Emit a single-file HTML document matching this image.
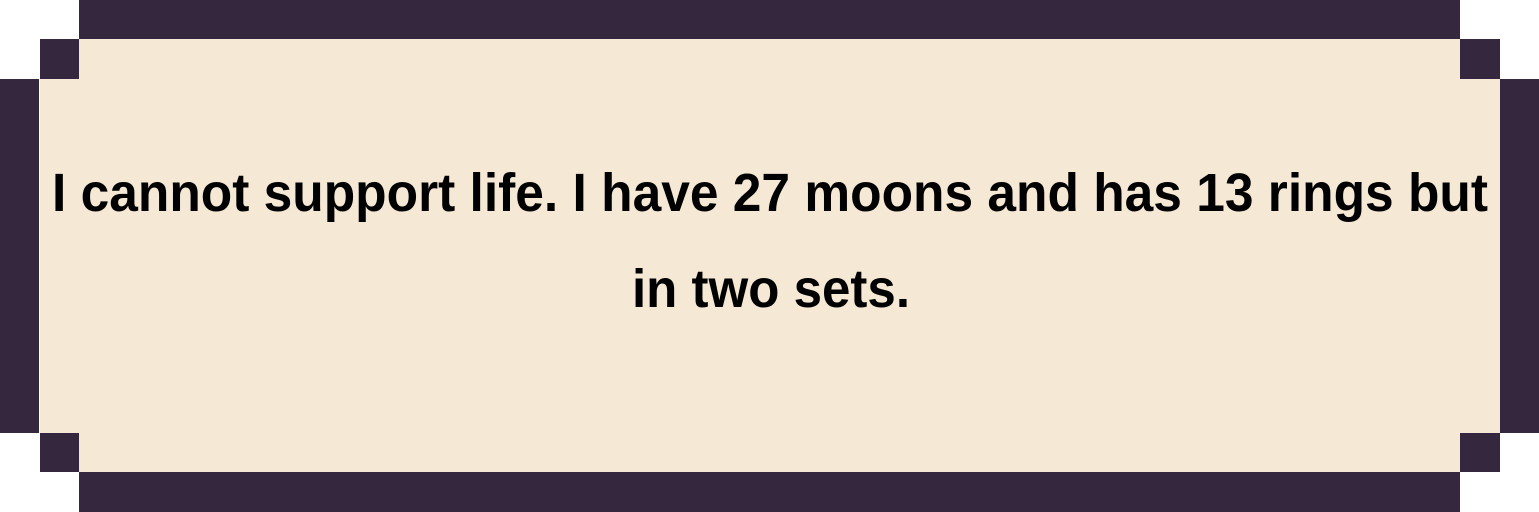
<!DOCTYPE html>
<html><head><meta charset="utf-8"><style>
html,body{margin:0;padding:0;background:#fff;width:1539px;height:512px;overflow:hidden}
svg{display:block}
</style></head><body>
<svg width="1539" height="512" viewBox="0 0 1539 512" xmlns="http://www.w3.org/2000/svg">
<rect x="40" y="39" width="1460" height="433" fill="#f5e8d4"/>
<rect x="79" y="0" width="1381" height="39" fill="#35273d"/>
<rect x="79" y="472" width="1381" height="40" fill="#35273d"/>
<rect x="40" y="39" width="39" height="40" fill="#35273d"/>
<rect x="1460" y="39" width="40" height="40" fill="#35273d"/>
<rect x="40" y="433" width="39" height="39" fill="#35273d"/>
<rect x="1460" y="433" width="40" height="39" fill="#35273d"/>
<rect x="0" y="79" width="39" height="354" fill="#35273d"/>
<rect x="1500" y="79" width="39" height="354" fill="#35273d"/>
<g font-family="Liberation Sans, sans-serif" font-weight="bold" font-size="54" fill="#000">
<text x="52" y="211" textLength="1436" lengthAdjust="spacingAndGlyphs">I cannot support life. I have 27 moons and has 13 rings but</text>
<text x="632" y="307" textLength="278" lengthAdjust="spacingAndGlyphs">in two sets.</text>
</g>
</svg>
</body></html>
